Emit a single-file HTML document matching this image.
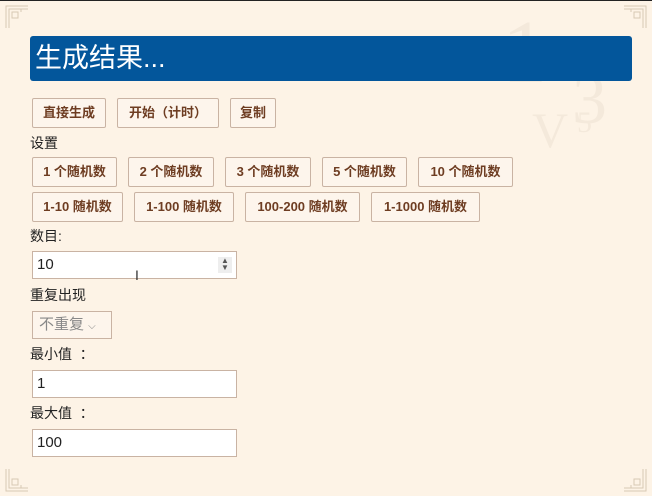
<!DOCTYPE html>
<html><head><meta charset="utf-8"><style>
*{box-sizing:border-box;margin:0;padding:0}
body{width:652px;height:496px;overflow:hidden;background:#fdf3e6;position:relative;font-family:"Liberation Sans","Noto Sans CJK SC",sans-serif;color:#222;border-top:1px solid #222}
.a{position:absolute}
.bar{left:30px;top:35px;width:602px;height:45px;background:#03569b;border-radius:3px;color:#fff;font-size:27px;line-height:45px;padding-left:5px}
.b{position:absolute;height:30px;border:1px solid #c9b3a3;background:#fdf5ec;color:#6e3d22;font-weight:bold;font-size:13px;line-height:28px;text-align:center;border-radius:2px}
.l{position:absolute;left:30px;font-size:14px;color:#222}
.in{position:absolute;left:32px;width:205px;height:28px;background:#fff;border:1px solid #c9b3a3;font-size:15px;line-height:26px;padding-left:4px}
.c{position:absolute;width:24px;height:24px}
.deco{position:absolute;right:0;top:0;width:170px;height:180px;opacity:.06;font-family:"Liberation Serif",serif;color:#7a5a3a}
</style></head><body>
<div class="deco"><span class="a" style="left:20px;top:0;font-size:90px">1</span><span class="a" style="left:90px;top:60px;font-size:70px">3</span><span class="a" style="left:50px;top:100px;font-size:50px">V</span><span class="a" style="left:95px;top:105px;font-size:30px">5</span></div>
<svg class="c" style="left:5px;top:4px" viewBox="0 0 24 24" fill="none" stroke="#d8c8b4" stroke-width="1"><path d="M1 23V1h22M4 23V4h19M7 7h6v6H7zM16 4v3"/></svg>
<svg class="c" style="right:5px;top:4px" viewBox="0 0 24 24" fill="none" stroke="#d8c8b4" stroke-width="1"><path d="M23 23V1H1M20 23V4H1M17 7h-6v6h6zM8 4v3"/></svg>
<svg class="c" style="left:5px;bottom:4px" viewBox="0 0 24 24" fill="none" stroke="#d8c8b4" stroke-width="1"><path d="M1 1v22h22M4 1v19h19M7 17h6v-6H7zM16 20v-3"/></svg>
<svg class="c" style="right:5px;bottom:4px" viewBox="0 0 24 24" fill="none" stroke="#d8c8b4" stroke-width="1"><path d="M23 1v22H1M20 1v19H1M17 17h-6v-6h6zM8 20v-3"/></svg>
<div class="a bar">生成结果...</div>
<div class="b" style="left:32px;top:97px;width:74px">直接生成</div>
<div class="b" style="left:117px;top:97px;width:102px">开始（计时）</div>
<div class="b" style="left:230px;top:97px;width:46px">复制</div>
<div class="l" style="top:132px">设置</div>
<div class="b" style="left:32px;top:156px;width:85px">1 个随机数</div>
<div class="b" style="left:128px;top:156px;width:86px">2 个随机数</div>
<div class="b" style="left:225px;top:156px;width:86px">3 个随机数</div>
<div class="b" style="left:322px;top:156px;width:85px">5 个随机数</div>
<div class="b" style="left:418px;top:156px;width:95px">10 个随机数</div>
<div class="b" style="left:32px;top:191px;width:91px">1-10 随机数</div>
<div class="b" style="left:134px;top:191px;width:100px">1-100 随机数</div>
<div class="b" style="left:245px;top:191px;width:115px">100-200 随机数</div>
<div class="b" style="left:371px;top:191px;width:109px">1-1000 随机数</div>
<div class="l" style="top:225px">数目:</div>
<div class="in" style="top:250px">10<span class="a" style="right:4px;top:5px;width:14px;height:16px;background:#eee;font-size:8px;line-height:7px;text-align:center;color:#555">▲<br>▼</span></div>
<div class="a" style="left:135px;top:266px;font-size:14px;color:#333">I</div>
<div class="l" style="top:284px">重复出现</div>
<div class="a" style="left:32px;top:310px;width:80px;height:28px;border:1px solid #c9b3a3;background:#fdf5ec;color:#888;font-size:15px;line-height:26px;padding-left:6px">不重复 <span style="font-size:10px">⌵</span></div>
<div class="l" style="top:343px">最小值 &nbsp;：</div>
<div class="in" style="top:369px">1</div>
<div class="l" style="top:402px">最大值 &nbsp;：</div>
<div class="in" style="top:428px">100</div>
</body></html>
